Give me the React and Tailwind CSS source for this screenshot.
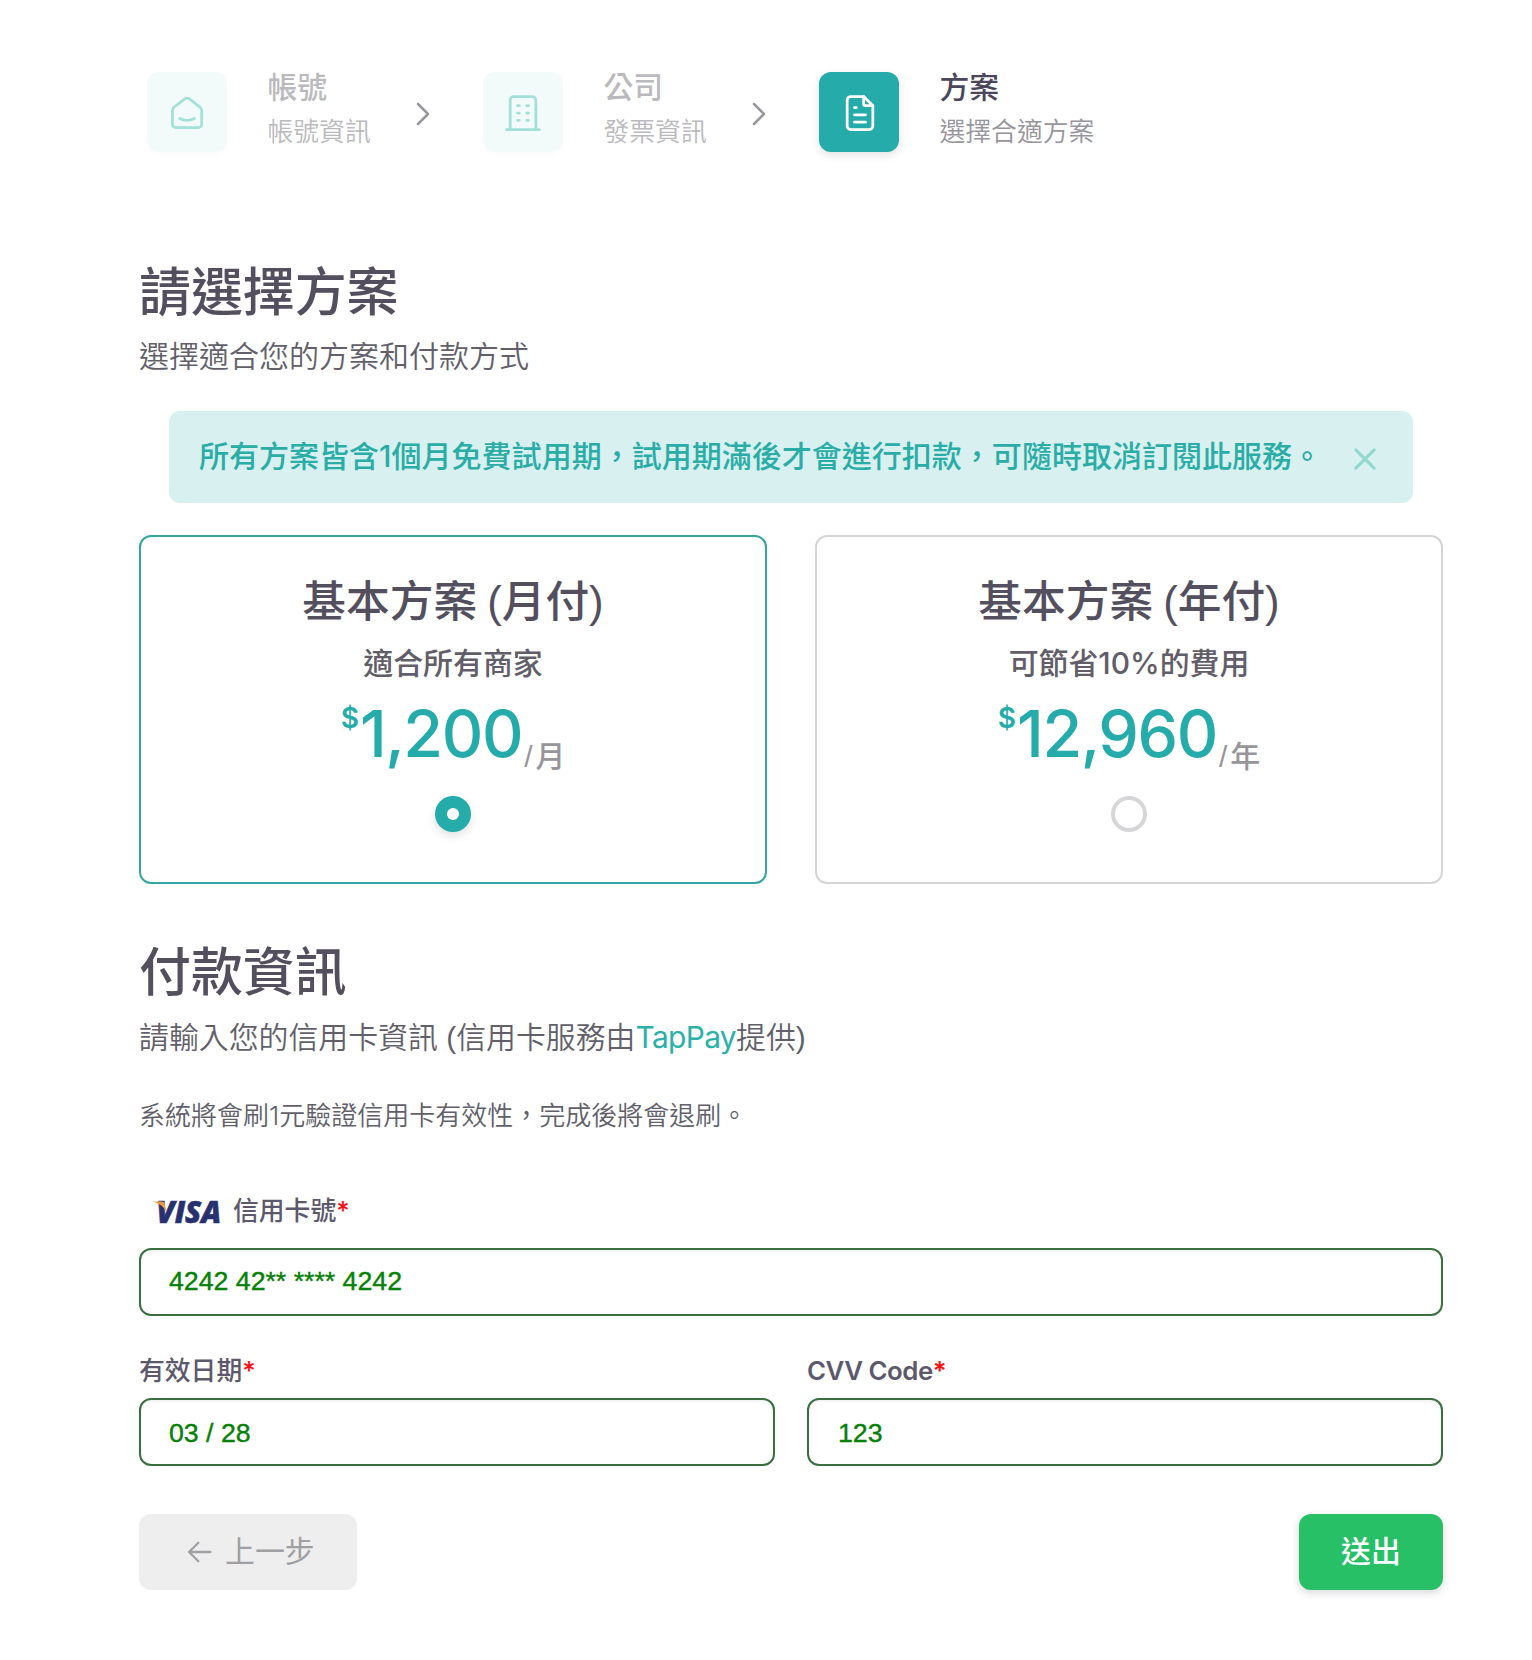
function Icon({ size, stroke = 1.5, className = "", children }) {
  return (
    <svg
      width={size}
      height={size}
      viewBox="0 0 24 24"
      fill="none"
      stroke="currentColor"
      strokeWidth={stroke}
      strokeLinecap="round"
      strokeLinejoin="round"
      className={className}
    >
      {children}
    </svg>
  );
}

const HomeIcon = () => (
  <Icon size={44} className="mt-0.5">
    <path d="M19 8.71l-5.333 -4.148a2.666 2.666 0 0 0 -3.274 0l-5.334 4.148a2.665 2.665 0 0 0 -1.029 2.105v7.2a2 2 0 0 0 2 2h12a2 2 0 0 0 2 -2v-7.2c0 -.823 -.38 -1.6 -1.03 -2.105" />
    <path d="M16 15c-2.21 1.333 -5.792 1.333 -8 0" />
  </Icon>
);

const BuildingIcon = () => (
  <Icon size={44} className="mt-0.5">
    <path d="M3 21h18M9 8h1M9 12h1M9 16h1M14 8h1M14 12h1M14 16h1" />
    <path d="M5 21v-16a2 2 0 0 1 2 -2h10a2 2 0 0 1 2 2v16" />
  </Icon>
);

const FileIcon = () => (
  <Icon size={44} className="mt-0.5 ml-px">
    <path d="M14 3v4a1 1 0 0 0 1 1h4" />
    <path d="M17 21h-10a2 2 0 0 1 -2 -2v-14a2 2 0 0 1 2 -2h7l5 5v11a2 2 0 0 1 -2 2z" />
    <path d="M9 9h1M9 13h6M9 17h6" />
  </Icon>
);

const Chevron = () => (
  <Icon size={40} className="text-[#97959e]">
    <path d="M9 6l6 6l-6 6" />
  </Icon>
);

function Step({ icon, title, text, active }) {
  return (
    <div className="flex items-start">
      <div
        className={
          active
            ? "flex h-20 w-20 items-center justify-center rounded-xl bg-[#24abaa] text-white shadow-[0_3px_8px_rgba(47,43,61,0.14)]"
            : "flex h-20 w-20 items-center justify-center rounded-xl bg-[#f2fbfa] text-[#a3e1d8] shadow-[0_3px_8px_rgba(47,43,61,0.02)]"
        }
      >
        {icon}
      </div>
      <div className="ml-[40.5px] whitespace-nowrap">
        <div
          className={
            active
              ? "h-[44px] text-[29.8px]/[31px] font-medium text-[#4b465c]"
              : "h-[44px] text-[29.8px]/[31px] font-medium text-[#bab9bd]"
          }
        >
          {title}
        </div>
        <div
          className={
            active
              ? "text-[25.8px]/[31px] font-[350] text-[#96949c]"
              : "text-[25.8px]/[31px] font-[350] text-[#bab9bd]"
          }
        >
          {text}
        </div>
      </div>
    </div>
  );
}

function Plan({ title, text, price, unit, selected }) {
  return (
    <div
      className={
        selected
          ? "flex h-[349px] w-[628px] flex-col items-center rounded-xl border-2 border-[#35a5a3] pt-[43px] whitespace-nowrap"
          : "flex h-[349px] w-[628px] flex-col items-center rounded-xl border-2 border-[#d5d5d7] pt-[43px] whitespace-nowrap"
      }
    >
      <div className='font-["Liberation_Sans","Noto_Sans_CJK_TC",sans-serif] text-[43.7px]/[44px] font-medium text-[#544f5e] [word-spacing:-2px]'>
        {title}
      </div>
      <div className="mt-[24px] text-[29.9px]/[30px] font-medium text-[#615d69]">{text}</div>
      <div className="mt-[25px] flex h-[74px] items-start">
        <span className="text-[28px]/[30px] font-semibold text-[#24abaa]">$</span>
        <span className="ml-px text-[64.5px]/[62px] font-medium tracking-[-0.022em] text-[#24abaa]">{price}</span>
        <span className='mt-[38px] ml-[2px] font-["Liberation_Sans","Noto_Sans_CJK_TC",sans-serif] text-[29.9px]/[31px] font-medium text-[#97959b]'>
          /<span className="ml-[3px]">{unit}</span>
        </span>
      </div>
      {selected ? (
        <div className="mt-[19px] flex h-9 w-9 items-center justify-center rounded-full bg-[#24abaa] shadow-[0_4px_8px_rgba(47,43,61,0.14)]">
          <div className="h-3 w-3 rounded-full bg-white" />
        </div>
      ) : (
        <div className="mt-[19px] h-9 w-9 rounded-full border-4 border-[#d6d6d8]" />
      )}
    </div>
  );
}

function Field({ children }) {
  return (
    <div className='flex h-[68px] items-center rounded-xl border-2 border-[#3a7040] px-7 font-["Liberation_Sans",sans-serif] text-[26.7px] text-[#078007] shadow-[inset_0_2px_3px_rgba(0,0,0,0.05)] [-webkit-text-stroke:0.4px_#078007]'>
      {children}
    </div>
  );
}

const Star = () => <span className="text-[#fb0f12]">*</span>;

function VisaLogo() {
  return (
    <svg width="70" height="32" viewBox="0 0 70 32" className="mr-[11px] shrink-0 overflow-visible">
      <text
        x="4.500"
        y="28"
        textLength="64.5"
        lengthAdjust="spacingAndGlyphs"
        fontFamily="Open Sans"
        fontSize="29.5"
        fontWeight="800"
        fontStyle="italic"
        fill="#29306f"
        stroke="#29306f"
        strokeWidth="0.6"
      >
        VISA
      </text>
      <path d="M0.500 6.500h9c1.800 0 2.800 0.800 3.200 2.400l1.900 8.500c-2.600-5.600-7.200-9-14.100-10.900z" fill="#eb9b46" />
    </svg>
  );
}

export default function App() {
  return (
    <div className='h-[1660px] w-[1532px] bg-white pt-[72px] pl-[139px] font-["Inter","Noto_Sans_CJK_TC",sans-serif]'>
      <div className="ml-2 flex h-20 items-start">
        <div className="w-[256px]">
          <Step icon={<HomeIcon />} title="帳號" text="帳號資訊" />
        </div>
        <div className="mt-[22px] w-20">
          <Chevron />
        </div>
        <div className="w-[256px]">
          <Step icon={<BuildingIcon />} title="公司" text="發票資訊" />
        </div>
        <div className="mt-[22px] w-20">
          <Chevron />
        </div>
        <Step icon={<FileIcon />} title="方案" text="選擇合適方案" active />
      </div>

      <div className="w-[1304px]">
        <h2 className="mt-[114px] text-[51.9px]/[54px] font-medium text-[#544f5e]">請選擇方案</h2>
        <p className="mt-[21px] text-[30px]/[30px] font-[350] text-[#625f6b]">選擇適合您的方案和付款方式</p>

        <div className="mx-[30px] mt-[40px] flex h-[92px] items-center justify-between rounded-[11px] bg-[#d8f0ef] pr-[28px] pl-[30px] text-[#2aada7]">
          <span className="mb-0.5 text-[30.02px]/[30px] font-medium whitespace-nowrap">
            所有方案皆含1個月免費試用期，試用期滿後才會進行扣款，可隨時取消訂閱此服務。
          </span>
          <Icon size={40} stroke={1.8} className="mt-1 text-[#91d8cf]">
            <path d="M17.500 6.500l-11 11M6.500 6.500l11 11" />
          </Icon>
        </div>

        <div className="mt-[32px] flex justify-between">
          <Plan title="基本方案 (月付)" text="適合所有商家" price="1,200" unit="月" selected />
          <Plan title="基本方案 (年付)" text="可節省10%的費用" price="12,960" unit="年" />
        </div>

        <h2 className="mt-[62px] text-[51.9px]/[54px] font-medium text-[#544f5e]">付款資訊</h2>
        <p className='mt-[22px] h-[30px] font-["Liberation_Sans","Noto_Sans_CJK_TC",sans-serif] text-[29.9px]/[30px] font-[350] whitespace-nowrap text-[#625f6b]'>
          請輸入您的信用卡資訊 (信用卡服務由
          <span className='font-["Inter",sans-serif] font-normal tracking-[-0.022em] text-[#2bb0a9]'>TapPay</span>
          提供)
        </p>
        <p className="mt-[49px] text-[26px]/[30px] font-[350] whitespace-nowrap text-[#625f6b]">
          系統將會刷1元驗證信用卡有效性，完成後將會退刷。
        </p>

        <div className="mt-[65px] ml-[13px] flex h-[30px] items-center text-[25.8px]/[30px] font-medium text-[#5d596c]">
          <VisaLogo />
          <span>
            信用卡號
            <Star />
          </span>
        </div>
        <div className="mt-[22px]">
          <Field>
            <span className="mb-px">4242 42** **** 4242</span>
          </Field>
        </div>

        <div className="mt-[40px] grid grid-cols-2 gap-x-8">
          <div>
            <div className="mb-[12px] text-[25.8px]/[30px] font-medium text-[#5d596c]">
              有效日期
              <Star />
            </div>
            <Field>
              <span className="mt-0.5">03 / 28</span>
            </Field>
          </div>
          <div>
            <div className="mb-[12px] text-[25.8px]/[30px] font-semibold tracking-[-0.018em] text-[#5d596c]">
              CVV Code
              <Star />
            </div>
            <Field>
              <span className="mt-0.5 ml-px">123</span>
            </Field>
          </div>
        </div>

        <div className="mt-[48px] flex justify-between">
          <button className="flex h-[76px] w-[218px] items-center rounded-xl bg-[#eeeeee] pl-[43px] text-[29.9px]/[30px] text-[#a09fa3]">
            <Icon size={34} stroke={1.6} className="mr-[9px]">
              <path d="M5 12h15M5 12l6.500 6.500M5 12l6.500 -6.500" />
            </Icon>
            <span className="mb-0.5">上一步</span>
          </button>
          <button className="flex h-[76px] w-[144px] items-center justify-center rounded-xl bg-[#28c066] text-[29.9px]/[30px] font-medium text-white shadow-[0_3px_8px_rgba(47,43,61,0.18)]">
            <span className="mb-0.5">送出</span>
          </button>
        </div>
      </div>
    </div>
  );
}
